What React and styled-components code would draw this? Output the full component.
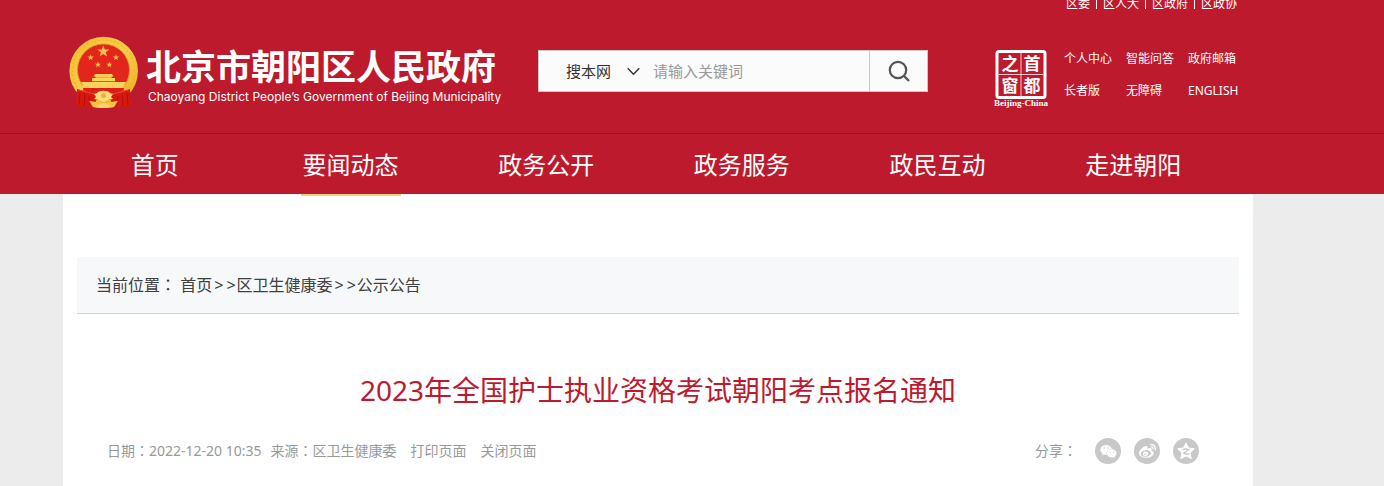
import React from "react";
import styled, { createGlobalStyle } from "styled-components";
import { FaWeibo, FaWeixin } from "react-icons/fa";

const RED = "#bd1a2d";

const GlobalStyle = createGlobalStyle`
  * { box-sizing: border-box; }
  body {
    margin: 0;
    background: #ececec;
    color: #404040;
    font-family: "Noto Sans", "Noto Sans CJK SC", sans-serif;
  }
  a { color: inherit; text-decoration: none; }
`;

const Page = styled.div`
  display: flex;
  flex-direction: column;
  min-height: 100vh;
`;

const Header = styled.header`
  display: flex;
  flex-direction: column;
  background: ${RED};
  color: #fff;
  overflow: clip;
`;

/* Centres the site column, leaving a gutter on the right of the window. */
const Shell = styled.div`
  width: 100%;
  padding-right: 68px;
`;

const Column = styled.div`
  max-width: 1190px;
  margin: 0 auto;
`;

const TopLinks = styled.nav`
  display: flex;
  justify-content: flex-end;
  margin-top: -6px;
  padding-right: 10px;
  font-size: 12px;
  line-height: 20px;
`;

const TopLink = styled.a`
  padding: 0 6px 0 7px;
  position: relative;
  & + &::before {
    content: "";
    position: absolute;
    left: 0;
    top: 2px;
    width: 1px;
    height: 13px;
    background: #fff;
  }
`;

const Masthead = styled.div`
  display: grid;
  grid-template-columns: 475px 390px 1fr;
  align-items: start;
  height: 119px;
  padding: 22px 15px 0 0;
`;

const Brand = styled.a`
  display: flex;
  gap: 7px;
  padding-left: 6px;
  white-space: nowrap;
`;

const BrandText = styled.span`
  display: flex;
  flex-direction: column;
  padding-top: 11px;
`;

const BrandName = styled.strong`
  font-size: 35px;
  line-height: 40px;
`;

const BrandEnglish = styled.span`
  padding-left: 2px;
  font-family: Inter, "Liberation Sans", sans-serif;
  font-size: 12px;
  line-height: 20px;
`;

const SearchForm = styled.form`
  display: flex;
  height: 42px;
  margin-top: 14px;
  background: #fbfbfb;
  border: 1px solid #c9c9c9;
`;

const ScopeBox = styled.label`
  position: relative;
  display: flex;
  width: 101px;
  flex: none;
  svg {
    position: absolute;
    left: 88px;
    top: 16px;
    pointer-events: none;
  }
`;

const Scope = styled.select`
  appearance: none;
  width: 100%;
  padding: 0 0 2px 27px;
  border: 0;
  background: transparent;
  color: #333;
  font: 15px "Noto Sans CJK SC", sans-serif;
`;

const Keyword = styled.input`
  flex: 1;
  min-width: 0;
  padding: 0 0 2px 13px;
  border: 0;
  background: transparent;
  font: 15px "Noto Sans CJK SC", sans-serif;
  &::placeholder { color: #999; opacity: 1; }
`;

const SearchButton = styled.button`
  width: 58px;
  padding: 0;
  border: 0;
  border-left: 1px solid #c9c9c9;
  background: transparent;
  display: grid;
  place-items: center;
`;

const Tools = styled.div`
  display: flex;
  justify-content: flex-end;
  gap: 15px;
`;

const SealLink = styled.a`
  margin-top: 14px;
  svg { display: block; }
`;

const ToolLinks = styled.nav`
  display: grid;
  grid-template-columns: repeat(3, 50px);
  column-gap: 12px;
  margin-top: 8px;
  font-size: 12px;
  line-height: 30px;
  white-space: nowrap;
`;

const MainNav = styled.nav`
  border-top: 1px solid #8f1422;
`;

const NavList = styled.div`
  display: grid;
  grid-template-columns: repeat(6, 1fr);
  height: 60px;
  margin-left: -6px;
  padding-right: 22px;
`;

const NavItem = styled.a`
  justify-self: center;
  font-size: 24px;
  line-height: 62px;
`;

const Sheet = styled.main`
  display: flex;
  flex: 1;
`;

const SheetShell = styled(Shell)`
  display: flex;
`;

const Paper = styled(Column)`
  flex: 1;
  padding: 0 14px 22px;
  background: #fff;
`;

const ActiveMark = styled.div`
  display: grid;
  grid-template-columns: repeat(6, 1fr);
  margin-left: -20px;
  padding-right: 4px;
  &::before {
    content: "";
    grid-column: 2;
    justify-self: center;
    width: 100px;
    height: 2px;
    background: #f0cf85;
  }
`;

const Breadcrumb = styled.nav`
  margin-top: 61px;
  padding: 0 19px;
  background: #f7f8fa;
  border-bottom: 1px solid #cad5e5;
  font-size: 16px;
  line-height: 56px;
`;

/* The Traditional Chinese face sets the full-width colon in mid cell. */
const Colon = styled.span`
  font-family: "Noto Sans CJK TC", sans-serif;
  line-height: 1;
`;

const Arrows = styled.span`
  display: inline-flex;
  gap: 3px;
  padding: 0 1px 0 2px;
`;

const Title = styled.h1`
  margin: 56px 0 28px;
  color: ${RED};
  font-size: 28px;
  font-weight: 400;
  line-height: 40px;
  text-align: center;
`;

const Meta = styled.div`
  display: flex;
  align-items: center;
  gap: 14px;
  padding: 0 40px 0 30px;
  color: #999;
  font-size: 14px;
  line-height: 26px;
`;

const Facts = styled.div`
  display: flex;
  gap: 9px;
`;

const TextButton = styled.button`
  padding: 0;
  border: 0;
  background: none;
  color: inherit;
  font: inherit;
`;

const Share = styled.div`
  display: flex;
  gap: 13px;
  margin-left: auto;
`;

const ShareLabel = styled.span`
  padding-right: 5px;
`;

const ShareLink = styled.a`
  display: grid;
  place-items: center;
  width: 26px;
  height: 26px;
  border-radius: 50%;
  background: #c8c8c8;
  color: #fff;
`;

const star = (cx, cy, r) =>
  Array.from({ length: 10 }, (_, i) => {
    const a = -Math.PI / 2 + (i * Math.PI) / 5;
    const d = i % 2 ? r * 0.4 : r;
    return `${(cx + d * Math.cos(a)).toFixed(2)},${(cy + d * Math.sin(a)).toFixed(2)}`;
  }).join(" ");

function Emblem() {
  return (
    <svg width="70" height="73" viewBox="0 0 70 73" aria-hidden="true">
      <defs>
        <linearGradient id="gold" x1="0" y1="0" x2="1" y2="1">
          <stop offset="0" stopColor="#f3bd30" />
          <stop offset=".5" stopColor="#f9cd48" />
          <stop offset="1" stopColor="#eda91f" />
        </linearGradient>
      </defs>
      <circle cx="34.7" cy="35" r="34.3" fill="url(#gold)" />
      <circle cx="34.7" cy="35" r="31" fill="none" stroke="#ebb235" strokeWidth="1.2" strokeDasharray="2 2" />
      <circle cx="34.5" cy="34" r="26" fill="#e2261b" stroke="#d99a20" strokeWidth=".8" />
      <g fill="#f4c04d">
        <polygon points={star(34.3, 15.5, 6.3)} />
        <polygon points={star(21.7, 21.5, 3.3)} />
        <polygon points={star(47, 21.5, 3.3)} />
        <polygon points={star(29, 28.7, 3.3)} />
        <polygon points={star(40.3, 28.7, 3.3)} />
      </g>
      <g fill="#fbd25c">
        <path d="M26 38h17l1.500 2.500h-2V42H46v3H23v-3h3.500v-1.500h-2z" />
        <path d="M12 46h45l-3 6H15z" />
      </g>
      <path d="M26 41.300h17M23 45.500h23" stroke="#d98622" strokeWidth=".6" />
      <path d="M14 52h41l-2 12H16z" fill="#dc2013" />
      <path d="M8 53l7 2 9 1 4 6-3 8-5 1-4-1-4 1-6-2 2-6z" fill="#d8180f" />
      <path d="M61 53l-7 2-9 1-4 6 3 8 5 1 4-1 4 1 6-2-2-6z" fill="#d8180f" />
      <path d="M11 57l-1 12M16 58l-1 12M20 60l1 9M58 57l1 12M53 58l1 12M49 60l-1 9" stroke="#a91016" strokeWidth="1" />
      <path d="M9 54c6 1 11 3 17 4M60 54c-6 1-11 3-17 4" stroke="#ef4a2c" strokeWidth="1.200" fill="none" />
      <path d="M28 57c2-3 11-3 13 0l3 1-2 3 2 2-5 1-4.500 2-4.500-2-5-1 2-2-2-3z" fill="#fbdc7c" />
      <circle cx="34.500" cy="59.500" r="2.500" fill="#eeb03a" />
      <path d="M20 65c5 0 9 3 14.500 2 5.500 1 9.500-2 14.500-2l-4 6-4 1-6.500-3-6.500 3-4-1z" fill="#f8c341" />
      <path d="M27 70l7.500-3 7.500 3-3 2h-9z" fill="#f9d267" />
    </svg>
  );
}

function Seal() {
  return (
    <svg width="55" height="58" viewBox="0 0 55 58" role="img" aria-label="首都之窗">
      <rect x="3" y="1.500" width="48" height="46" rx="2" fill="none" stroke="#fff" strokeWidth="3" />
      <path d="M27 3v43M5 24.500h44" stroke="#f3c9cd" strokeWidth="1" />
      <g fill="#fff" fontFamily="'Noto Sans CJK SC', sans-serif" fontWeight="700" fontSize="17" textAnchor="middle">
        <text x="16" y="20">之</text>
        <text x="38" y="20">首</text>
        <text x="16" y="42">窗</text>
        <text x="38" y="42">都</text>
      </g>
      <text x="27" y="56" fill="#fff" fontFamily="'Liberation Serif', serif" fontWeight="700" fontSize="9" textAnchor="middle">
        Beijing-China
      </text>
    </svg>
  );
}

function QzoneIcon() {
  return (
    <svg width="18" height="18" viewBox="0 0 18 18" aria-hidden="true">
      <polygon
        points="9,0.8 11.5,6 17.3,6.8 13.1,10.8 14.2,16.6 9,13.9 3.8,16.6 4.9,10.8 0.7,6.8 6.5,6"
        fill="#fff"
        stroke="#fff"
        strokeLinejoin="round"
      />
      <path d="M5.500 7.500c2-.6 4.500-.6 6.300 0L6.700 11.500c2 .6 4 .6 6 .2" fill="none" stroke="#c8c8c8" strokeWidth="1.300" />
    </svg>
  );
}

function CrumbArrows() {
  return (
    <Arrows>
      <span>&gt;</span>
      <span>&gt;</span>
    </Arrows>
  );
}

const topLinks = ["区委", "区人大", "区政府", "区政协"];
const toolLinks = ["个人中心", "智能问答", "政府邮箱", "长者版", "无障碍", "ENGLISH"];
const navItems = ["首页", "要闻动态", "政务公开", "政务服务", "政民互动", "走进朝阳"];

export default function App() {
  return (
    <Page>
      <GlobalStyle />
      <Header>
        <Shell>
          <Column>
            <TopLinks>
              {topLinks.map((t) => (
                <TopLink key={t} href="#">{t}</TopLink>
              ))}
            </TopLinks>
            <Masthead>
              <Brand href="#">
                <Emblem />
                <BrandText>
                  <BrandName>北京市朝阳区人民政府</BrandName>
                  <BrandEnglish>Chaoyang District People’s Government of Beijing Municipality</BrandEnglish>
                </BrandText>
              </Brand>
              <SearchForm role="search" onSubmit={(e) => e.preventDefault()}>
                <ScopeBox>
                  <Scope aria-label="搜索范围">
                    <option>搜本网</option>
                  </Scope>
                  <svg width="13" height="9" viewBox="0 0 13 9" aria-hidden="true">
                    <path d="M.7 1.200l5.800 6 5.800-6" fill="none" stroke="#333" strokeWidth="1.400" />
                  </svg>
                </ScopeBox>
                <Keyword type="text" aria-label="关键词" placeholder="请输入关键词" />
                <SearchButton type="submit" aria-label="搜索">
                  <svg width="22" height="22" viewBox="0 0 22 22" aria-hidden="true">
                    <circle cx="10" cy="10" r="8.200" fill="none" stroke="#555" strokeWidth="2.200" />
                    <path d="M15.500 15.500l5.500 5.500" stroke="#555" strokeWidth="2.400" />
                  </svg>
                </SearchButton>
              </SearchForm>
              <Tools>
                <SealLink href="#">
                  <Seal />
                </SealLink>
                <ToolLinks>
                  {toolLinks.map((t) => (
                    <a key={t} href="#">{t}</a>
                  ))}
                </ToolLinks>
              </Tools>
            </Masthead>
          </Column>
        </Shell>
        <MainNav>
          <Shell>
            <Column>
              <NavList>
                {navItems.map((t) => (
                  <NavItem key={t} href="#">{t}</NavItem>
                ))}
              </NavList>
            </Column>
          </Shell>
        </MainNav>
      </Header>
      <Sheet>
        <SheetShell>
          <Paper>
            <ActiveMark />
            <Breadcrumb>
              当前位置<Colon>：</Colon> <a href="#">首页</a>
              <CrumbArrows />
              <a href="#">区卫生健康委</a>
              <CrumbArrows />
              <a href="#">公示公告</a>
            </Breadcrumb>
            <Title>2023年全国护士执业资格考试朝阳考点报名通知</Title>
            <Meta>
              <Facts>
                <span>日期<Colon>：</Colon>2022-12-20 10:35</span>
                <span>来源<Colon>：</Colon>区卫生健康委</span>
              </Facts>
              <TextButton type="button">打印页面</TextButton>
              <TextButton type="button">关闭页面</TextButton>
              <Share>
                <ShareLabel>分享<Colon>：</Colon></ShareLabel>
                <ShareLink href="#" aria-label="微信"><FaWeixin size={17} /></ShareLink>
                <ShareLink href="#" aria-label="微博"><FaWeibo size={17} /></ShareLink>
                <ShareLink href="#" aria-label="QQ空间"><QzoneIcon /></ShareLink>
              </Share>
            </Meta>
          </Paper>
        </SheetShell>
      </Sheet>
    </Page>
  );
}
